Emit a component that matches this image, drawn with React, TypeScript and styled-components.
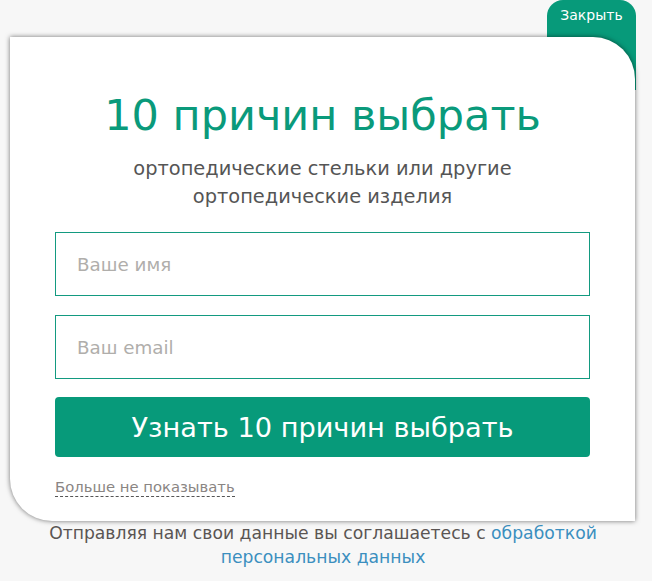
import React, { useState } from 'react'
import styled, { createGlobalStyle } from 'styled-components'

const GlobalStyle = createGlobalStyle`
  html, body {
    margin: 0;
    padding: 0;
    background: #f7f7f7;
  }
  body {
    font-family: 'DejaVu Sans', Verdana, sans-serif;
  }
`

const Page = styled.div`
  width: 652px;
  height: 581px;
  overflow: hidden;
  background: #f7f7f7;
`

const PopupWrap = styled.div`
  position: relative;
  margin: 37px 0 0 10px;
  width: 625px;
`

// tab sits behind the card's top-right corner
const CloseTab = styled.button`
  position: absolute;
  top: -37px;
  right: -1px;
  width: 89px;
  height: 90px;
  padding: 6px 0 0;
  border: none;
  border-radius: 16px 16px 0 0;
  background: #079a7a;
  color: #fff;
  font-family: 'DejaVu Sans', Verdana, sans-serif;
  font-size: 14px;
  line-height: 18px;
  display: flex;
  align-items: flex-start;
  justify-content: center;
  cursor: pointer;
  z-index: 0;
`

const Card = styled.div`
  position: relative;
  z-index: 1;
  box-sizing: border-box;
  width: 625px;
  height: 484px;
  padding: 52px 45px 0;
  background: #fff;
  border-radius: 0 42px 0 42px;
  box-shadow: 0 0 5px rgba(0, 0, 0, 0.55);
  display: flex;
  flex-direction: column;
  align-items: stretch;
`

const Title = styled.h1`
  margin: 0;
  font-size: 43px;
  line-height: 52px;
  font-weight: 400;
  color: #0a9a7b;
  text-align: center;
`

const Subtitle = styled.p`
  margin: 14px 0 0;
  font-size: 19.4px;
  line-height: 28px;
  color: #555;
  text-align: center;
`

const Form = styled.form`
  margin-top: 21px;
  display: flex;
  flex-direction: column;
  gap: 19px;
`

const Field = styled.input`
  box-sizing: border-box;
  width: 100%;
  height: 64px;
  padding: 0 21px;
  border: 1px solid #139a80;
  border-radius: 0;
  outline: none;
  background: #fff;
  font-family: 'DejaVu Sans', Verdana, sans-serif;
  font-size: 18.3px;
  color: #333;

  &::placeholder {
    color: #b0aeab;
  }
`

const Submit = styled.button`
  height: 60px;
  margin-top: -1px;
  border: none;
  border-radius: 4px;
  background: #079a7a;
  color: #fff;
  font-family: 'DejaVu Sans', Verdana, sans-serif;
  font-size: 27.2px;
  cursor: pointer;
`

const DontShow = styled.span`
  align-self: flex-start;
  margin-top: 21px;
  font-size: 14.8px;
  line-height: 18px;
  color: #8a8583;
  border-bottom: 1px dashed #555;
  cursor: pointer;
`

const Consent = styled.p`
  margin: 0;
  padding: 0 36px 0 30px;
  font-size: 17.2px;
  line-height: 24px;
  color: #5a5553;
  text-align: center;
`

const Link = styled.a`
  color: #3b8fbf;
  text-decoration: none;
`

export default function App() {
  const [name, setName] = useState('')
  const [email, setEmail] = useState('')

  return (
    <Page>
      <GlobalStyle />
      <PopupWrap>
        <CloseTab>Закрыть</CloseTab>
        <Card>
          <Title>10 причин выбрать</Title>
          <Subtitle>
            ортопедические стельки или другие
            <br />
            ортопедические изделия
          </Subtitle>
          <Form onSubmit={e => e.preventDefault()}>
            <Field placeholder="Ваше имя" value={name} onChange={e => setName(e.target.value)} />
            <Field placeholder="Ваш email" value={email} onChange={e => setEmail(e.target.value)} />
            <Submit type="submit">Узнать 10 причин выбрать</Submit>
          </Form>
          <DontShow>Больше не показывать</DontShow>
        </Card>
      </PopupWrap>
      <Consent>
        Отправляя нам свои данные вы соглашаетесь с <Link href="#">обработкой персональных данных</Link>
      </Consent>
    </Page>
  )
}
